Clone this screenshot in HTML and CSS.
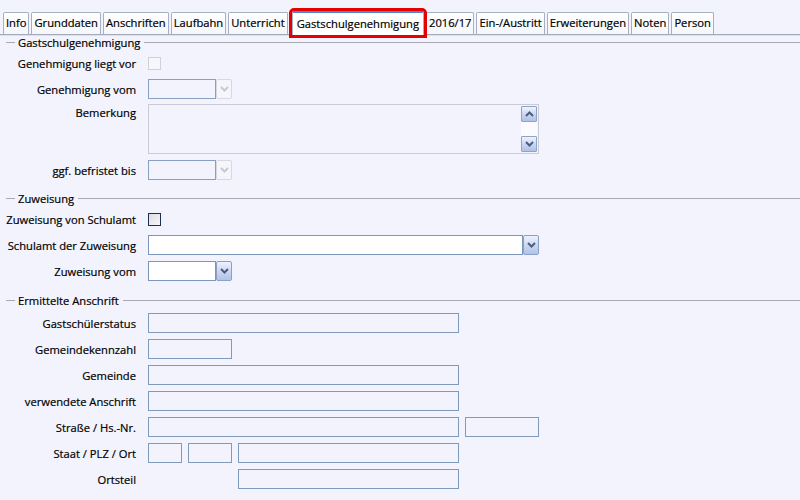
FILE: index.html
```html
<!DOCTYPE html>
<html>
<head>
<meta charset="utf-8">
<link rel="stylesheet" href="styles.css">
</head>
<body>
<div class="tabs">
  <div class="tab">Info</div>
  <div class="tab">Grunddaten</div>
  <div class="tab">Anschriften</div>
  <div class="tab">Laufbahn</div>
  <div class="tab">Unterricht</div>
  <div class="tab active">Gastschulgenehmigung</div>
  <div class="tab">2016/17</div>
  <div class="tab">Ein-/Austritt</div>
  <div class="tab">Erweiterungen</div>
  <div class="tab">Noten</div>
  <div class="tab">Person</div>
</div>

<div class="form">
  <section class="sec sec1">
    <div class="legend"><span>Gastschulgenehmigung</span></div>
    <div class="rows">
      <div class="row"><label>Genehmigung liegt vor</label><span class="chk off"></span></div>
      <div class="row"><label>Genehmigung vom</label><span class="inp date dis"></span><span class="btn dis"><svg viewBox="0 0 9 6" width="9" height="6"><path d="M1 1 L4.5 4.5 L8 1" fill="none" stroke="currentColor" stroke-width="2"/></svg></span></div>
      <div class="row row-top"><label>Bemerkung</label>
        <div class="memo">
          <div class="memo-text"></div>
          <div class="vscroll">
            <span class="sbtn"><svg viewBox="0 0 9 6" width="9" height="6"><path d="M1 5 L4.5 1.5 L8 5" fill="none" stroke="currentColor" stroke-width="2"/></svg></span>
            <span class="strack"></span>
            <span class="sbtn"><svg viewBox="0 0 9 6" width="9" height="6"><path d="M1 1 L4.5 4.5 L8 1" fill="none" stroke="currentColor" stroke-width="2"/></svg></span>
          </div>
        </div>
      </div>
      <div class="row"><label>ggf. befristet bis</label><span class="inp date dis"></span><span class="btn dis"><svg viewBox="0 0 9 6" width="9" height="6"><path d="M1 1 L4.5 4.5 L8 1" fill="none" stroke="currentColor" stroke-width="2"/></svg></span></div>
    </div>
  </section>

  <section class="sec sec2">
    <div class="legend"><span>Zuweisung</span></div>
    <div class="rows">
      <div class="row"><label>Zuweisung von Schulamt</label><span class="chk on"></span></div>
      <div class="row"><label>Schulamt der Zuweisung</label><span class="inp combo white"></span><span class="btn"><svg viewBox="0 0 9 6" width="9" height="6"><path d="M1 1 L4.5 4.5 L8 1" fill="none" stroke="currentColor" stroke-width="2"/></svg></span></div>
      <div class="row"><label>Zuweisung vom</label><span class="inp date white"></span><span class="btn"><svg viewBox="0 0 9 6" width="9" height="6"><path d="M1 1 L4.5 4.5 L8 1" fill="none" stroke="currentColor" stroke-width="2"/></svg></span></div>
    </div>
  </section>

  <section class="sec sec3">
    <div class="legend"><span>Ermittelte Anschrift</span></div>
    <div class="rows">
      <div class="row"><label>Gastschülerstatus</label><span class="inp long"></span></div>
      <div class="row"><label>Gemeindekennzahl</label><span class="inp kz"></span></div>
      <div class="row"><label>Gemeinde</label><span class="inp long"></span></div>
      <div class="row"><label>verwendete Anschrift</label><span class="inp long"></span></div>
      <div class="row gap6"><label>Straße / Hs.-Nr.</label><span class="inp long"></span><span class="inp hnr"></span></div>
      <div class="row gap6"><label>Staat / PLZ / Ort</label><span class="inp staat"></span><span class="inp plz"></span><span class="inp ort"></span></div>
      <div class="row gap6"><label>Ortsteil</label><span class="inp staat ghost"></span><span class="inp plz ghost"></span><span class="inp ort"></span></div>
    </div>
  </section>
</div>
</body>
</html>
```

FILE: styles.css
```css
* { box-sizing: border-box; }

body {
  margin: 0;
  width: 800px;
  height: 500px;
  overflow: hidden;
  background: #f3f3fd;
  font-family: "Open Sans", "Noto Sans", "Liberation Sans", sans-serif;
  font-size: 11.2px;
  color: #000000;
  -webkit-text-stroke: 0.2px #000000;
}

/* ---------- tabs ---------- */
.tabs {
  display: flex;
  align-items: flex-end;
  padding: 12px 0 0 3px;
  height: 35px;
  border-bottom: 1px solid #a3abbd;
  box-shadow: 0 1px 0 #dde0ea;
}

.tab {
  height: 22px;
  line-height: 20px;
  padding: 0 2px;
  margin-right: 2px;
  border: 1px solid #a6afc3;
  border-bottom: none;
  border-radius: 2px 2px 0 0;
  background: linear-gradient(#ffffff, #f5f6fb);
  white-space: nowrap;
}

.tab.active {
  height: 24px;
  margin: 0 2px 0 2px;
  padding: 0 4px;
  line-height: 22px;
  border-top: 2px solid #4f86d6;
  background: #ffffff;
  outline: 3px solid #e60000;
  position: relative;
  top: 1px;
}

/* ---------- form ---------- */
.form {
  display: flex;
  flex-direction: column;
}

.legend {
  display: flex;
  align-items: center;
  height: 14px;
  padding-left: 6px;
  gap: 3px;
}

.legend::before {
  content: "";
  width: 9px;
  border-top: 1px solid #a8a8b4;
}

.legend::after {
  content: "";
  flex: 1;
  border-top: 1px solid #a8a8b4;
  margin-left: 1px;
}

.sec2 { margin-top: 11px; }
.sec3 { margin-top: 12px; }

.rows {
  display: flex;
  flex-direction: column;
  gap: 6px;
  margin-top: 4px;
}
.sec3 .rows { margin-top: 6px; }

.row {
  display: flex;
  align-items: center;
  height: 20px;
}

.row label {
  width: 136px;
  text-align: right;
  margin-right: 12px;
  white-space: nowrap;
}

.row-top {
  align-items: flex-start;
  height: 49px;
}
.row-top label { line-height: 16px; }

.gap6 .inp + .inp { margin-left: 6px; }

/* ---------- inputs ---------- */
.inp {
  display: block;
  height: 20px;
  border: 1px solid #7f9aba;
  background: #f3f3fd;
}
.inp.white { background: #ffffff; border-color: #7b95bd; }
.inp.dis { border-color: #8aa0c2; }
.inp.date { width: 68px; }
.inp.combo { width: 375px; }
.inp.long { width: 311px; }
.inp.kz { width: 84px; }
.inp.hnr { width: 74px; }
.inp.staat { width: 34px; }
.inp.plz { width: 44px; }
.inp.ort { width: 221px; }
.inp.ghost { visibility: hidden; }

.btn {
  display: flex;
  align-items: center;
  justify-content: center;
  width: 16px;
  height: 20px;
  border: 1px solid #8aa0c8;
  border-radius: 2px;
  background: linear-gradient(#eef2fc, #c6d3ef 60%, #b2c3e8);
  color: #4a5d80;
}
.btn.dis {
  border-color: #d6d8e2;
  background: #f5f5fb;
  color: #c6c8d2;
}

/* ---------- checkbox ---------- */
.chk {
  display: block;
  width: 13px;
  height: 13px;
  border: 1px solid #cfd0da;
  background: #f6f6fb;
}
.chk.on {
  border-color: #1f2f4f;
  background: linear-gradient(135deg, #dcdce4, #f7f7fa);
}

/* ---------- memo ---------- */
.memo {
  display: flex;
  width: 391px;
  height: 50px;
  margin-top: -1px;
  border: 1px solid #cbcbd8;
  background: #f3f3fd;
}
.memo-text { flex: 1; }
.vscroll {
  display: flex;
  flex-direction: column;
  width: 17px;
  padding: 1px 1px 1px 0;
}
.sbtn {
  display: flex;
  align-items: center;
  justify-content: center;
  height: 16px;
  border: 1px solid #8ea3c8;
  border-radius: 1px;
  background: linear-gradient(#eef2fc, #c6d3ef 60%, #b0c1e6);
  color: #4a5d80;
}
.strack {
  flex: 1;
  background: #fafaff;
}
```
